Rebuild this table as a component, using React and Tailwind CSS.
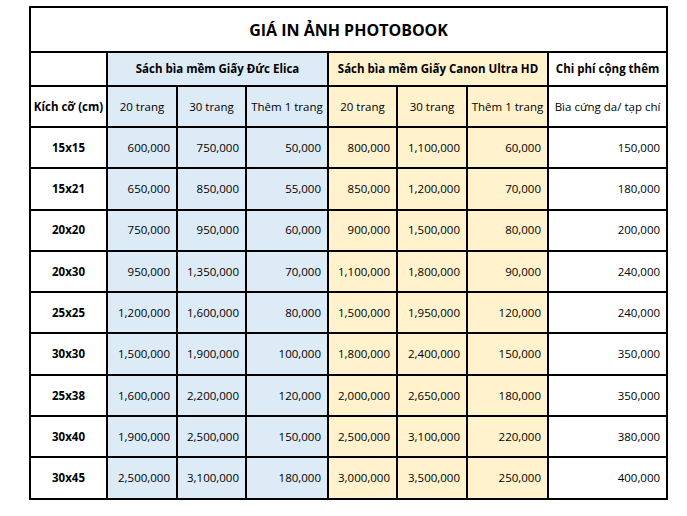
const rows = [
  ["15x15", "600,000", "750,000", "50,000", "800,000", "1,100,000", "60,000", "150,000"],
  ["15x21", "650,000", "850,000", "55,000", "850,000", "1,200,000", "70,000", "180,000"],
  ["20x20", "750,000", "950,000", "60,000", "900,000", "1,500,000", "80,000", "200,000"],
  ["20x30", "950,000", "1,350,000", "70,000", "1,100,000", "1,800,000", "90,000", "240,000"],
  ["25x25", "1,200,000", "1,600,000", "80,000", "1,500,000", "1,950,000", "120,000", "240,000"],
  ["30x30", "1,500,000", "1,900,000", "100,000", "1,800,000", "2,400,000", "150,000", "350,000"],
  ["25x38", "1,600,000", "2,200,000", "120,000", "2,000,000", "2,650,000", "180,000", "350,000"],
  ["30x40", "1,900,000", "2,500,000", "150,000", "2,500,000", "3,100,000", "220,000", "380,000"],
  ["30x45", "2,500,000", "3,100,000", "180,000", "3,000,000", "3,500,000", "250,000", "400,000"],
];

const widths = [77, 70, 69, 82, 69, 70, 81, 119];

const cell = "border-2 border-black";
const blue = "bg-[#ddebf7]";
const yellow = "bg-[#fff2cc]";

export default function App() {
  return (
    <div
      className="w-[687px] h-[516px] bg-white pl-[29px] pt-[6px] text-black"
      style={{ fontFamily: '"Open Sans", "Noto Sans", sans-serif' }}
    >
      <table className="border-collapse table-fixed w-[637px] text-[11.5px] leading-none">
        <colgroup>
          {widths.map((w, i) => (
            <col key={i} style={{ width: w }} />
          ))}
        </colgroup>
        <tbody>
          {/* Title */}
          <tr className="h-[45px]">
            <td colSpan={8} className={`${cell} text-center font-bold text-[16px]`}>
              GIÁ IN ẢNH PHOTOBOOK
            </td>
          </tr>

          {/* Group headers */}
          <tr className="h-[34px] font-bold">
            <td className={cell}></td>
            <td colSpan={3} className={`${cell} ${blue} text-center`}>
              Sách bìa mềm Giấy Đức Elica
            </td>
            <td colSpan={3} className={`${cell} ${yellow} text-center`}>
              Sách bìa mềm Giấy Canon Ultra HD
            </td>
            <td className={`${cell} text-center`}>Chi phí cộng thêm</td>
          </tr>

          {/* Column headers */}
          <tr className="h-[41px]">
            <td className={`${cell} text-center font-bold`}>Kích cỡ (cm)</td>
            <td className={`${cell} ${blue} text-center`}>20 trang</td>
            <td className={`${cell} ${blue} text-center`}>30 trang</td>
            <td className={`${cell} ${blue} text-center whitespace-nowrap`}>Thêm 1 trang</td>
            <td className={`${cell} ${yellow} text-center`}>20 trang</td>
            <td className={`${cell} ${yellow} text-center`}>30 trang</td>
            <td className={`${cell} ${yellow} text-center whitespace-nowrap`}>Thêm 1 trang</td>
            <td className={`${cell} text-center whitespace-nowrap`}>Bìa cứng da/ tạp chí</td>
          </tr>

          {rows.map((r) => (
            <tr key={r[0]} className="h-[41.3px]">
              <td className={`${cell} text-center font-bold`}>{r[0]}</td>
              {r.slice(1).map((v, i) => (
                <td
                  key={i}
                  className={`${cell} text-right pr-[6px] ${i < 3 ? blue : i < 6 ? yellow : ""}`}
                >
                  {v}
                </td>
              ))}
            </tr>
          ))}
        </tbody>
      </table>
    </div>
  );
}
